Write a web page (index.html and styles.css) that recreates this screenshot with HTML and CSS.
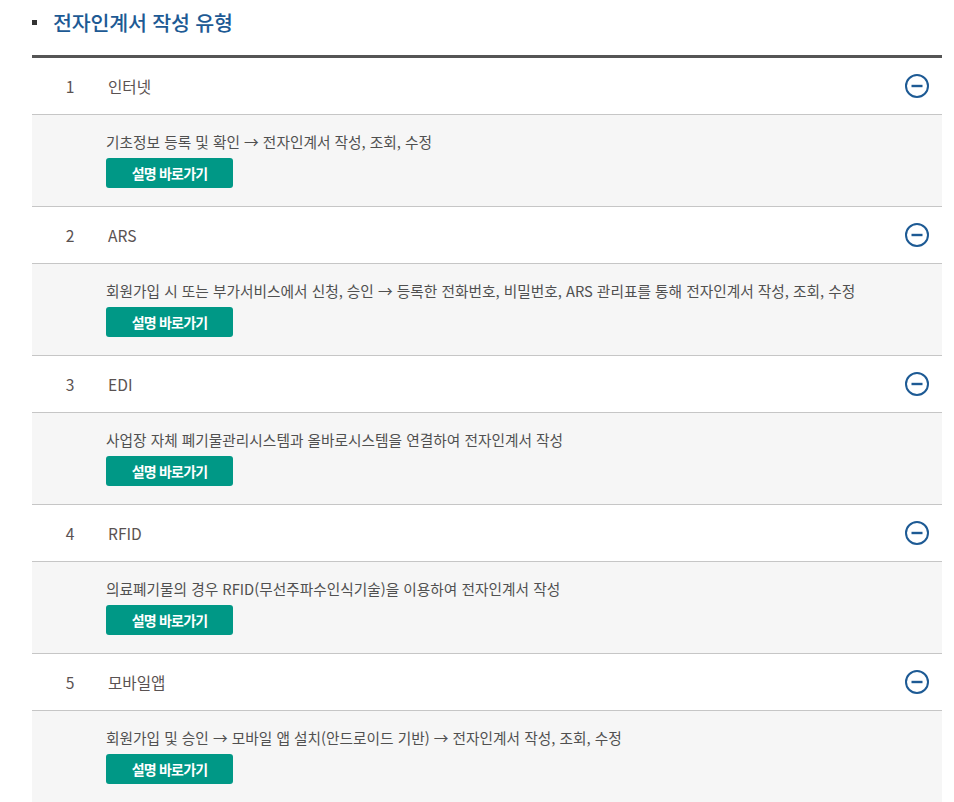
FILE: index.html
```html
<!DOCTYPE html>
<html lang="ko">
<head>
<meta charset="utf-8">
<title>전자인계서 작성 유형</title>
<link rel="stylesheet" href="styles.css">
</head>
<body>
<div class="wrap">
  <h2 class="title"><span class="bullet"></span>전자인계서 작성 유형</h2>
  <div class="list">
    <div class="item">
      <div class="head">
        <span class="num">1</span>
        <span class="name">인터넷</span>
        <svg class="toggle" width="26" height="26" viewBox="0 0 26 26"><circle cx="13" cy="13" r="11" fill="none" stroke="#1d5a94" stroke-width="2"/><line x1="7.5" y1="13" x2="18.5" y2="13" stroke="#1d5a94" stroke-width="2.4"/></svg>
      </div>
      <div class="body">
        <p class="desc">기초정보 등록 및 확인 → 전자인계서 작성, 조회, 수정</p>
        <a class="btn" href="#">설명 바로가기</a>
      </div>
    </div>
    <div class="item">
      <div class="head">
        <span class="num">2</span>
        <span class="name">ARS</span>
        <svg class="toggle" width="26" height="26" viewBox="0 0 26 26"><circle cx="13" cy="13" r="11" fill="none" stroke="#1d5a94" stroke-width="2"/><line x1="7.5" y1="13" x2="18.5" y2="13" stroke="#1d5a94" stroke-width="2.4"/></svg>
      </div>
      <div class="body">
        <p class="desc">회원가입 시 또는 부가서비스에서 신청, 승인 → 등록한 전화번호, 비밀번호, ARS 관리표를 통해 전자인계서 작성, 조회, 수정</p>
        <a class="btn" href="#">설명 바로가기</a>
      </div>
    </div>
    <div class="item">
      <div class="head">
        <span class="num">3</span>
        <span class="name">EDI</span>
        <svg class="toggle" width="26" height="26" viewBox="0 0 26 26"><circle cx="13" cy="13" r="11" fill="none" stroke="#1d5a94" stroke-width="2"/><line x1="7.5" y1="13" x2="18.5" y2="13" stroke="#1d5a94" stroke-width="2.4"/></svg>
      </div>
      <div class="body">
        <p class="desc">사업장 자체 폐기물관리시스템과 올바로시스템을 연결하여 전자인계서 작성</p>
        <a class="btn" href="#">설명 바로가기</a>
      </div>
    </div>
    <div class="item">
      <div class="head">
        <span class="num">4</span>
        <span class="name">RFID</span>
        <svg class="toggle" width="26" height="26" viewBox="0 0 26 26"><circle cx="13" cy="13" r="11" fill="none" stroke="#1d5a94" stroke-width="2"/><line x1="7.5" y1="13" x2="18.5" y2="13" stroke="#1d5a94" stroke-width="2.4"/></svg>
      </div>
      <div class="body">
        <p class="desc">의료폐기물의 경우 RFID(무선주파수인식기술)을 이용하여 전자인계서 작성</p>
        <a class="btn" href="#">설명 바로가기</a>
      </div>
    </div>
    <div class="item">
      <div class="head">
        <span class="num">5</span>
        <span class="name">모바일앱</span>
        <svg class="toggle" width="26" height="26" viewBox="0 0 26 26"><circle cx="13" cy="13" r="11" fill="none" stroke="#1d5a94" stroke-width="2"/><line x1="7.5" y1="13" x2="18.5" y2="13" stroke="#1d5a94" stroke-width="2.4"/></svg>
      </div>
      <div class="body">
        <p class="desc">회원가입 및 승인 → 모바일 앱 설치(안드로이드 기반) → 전자인계서 작성, 조회, 수정</p>
        <a class="btn" href="#">설명 바로가기</a>
      </div>
    </div>
  </div>
</div>
</body>
</html>
```

FILE: styles.css
```css
html, body {
  margin: 0;
  padding: 0;
  background: #ffffff;
}
body {
  font-family: "Noto Sans CJK KR", "Noto Sans", sans-serif;
  color: #555;
}
.wrap {
  width: 910px;
  margin-left: 32px;
}
.title {
  margin: 0;
  height: 44px;
  display: flex;
  align-items: center;
  font-size: 20.6px;
  font-weight: 500;
  color: #1d5a94;
  letter-spacing: -0.2px;
}
.bullet {
  display: inline-block;
  width: 5px;
  height: 5px;
  background: #333;
  margin: 0 16px 0 0;
}
.list {
  margin-top: 11px;
  border-top: 3px solid #555;
}
.item {
  border-bottom: 1px solid #c6c6c6;
}
.item:last-child {
  border-bottom: none;
}
.head {
  height: 56px;
  display: flex;
  align-items: center;
  border-bottom: 1px solid #c6c6c6;
  font-size: 15.6px;
  color: #5a5252;
}
.num {
  width: 76px;
  text-align: center;
}
.name {
  flex: 1;
}
.toggle {
  margin-right: 12px;
  display: block;
}
.body {
  background: #f6f6f6;
  padding: 16px 0 18px 74px;
}
.desc {
  margin: 0 0 5px;
  font-size: 14.7px;
  line-height: 22px;
  color: #505050;
}
.btn {
  display: flex;
  align-items: center;
  justify-content: center;
  width: 127px;
  height: 30px;
  border-radius: 3px;
  background: #009886;
  color: #fff;
  font-size: 14px;
  font-weight: 700;
  text-decoration: none;
  letter-spacing: -0.8px;
}
```
